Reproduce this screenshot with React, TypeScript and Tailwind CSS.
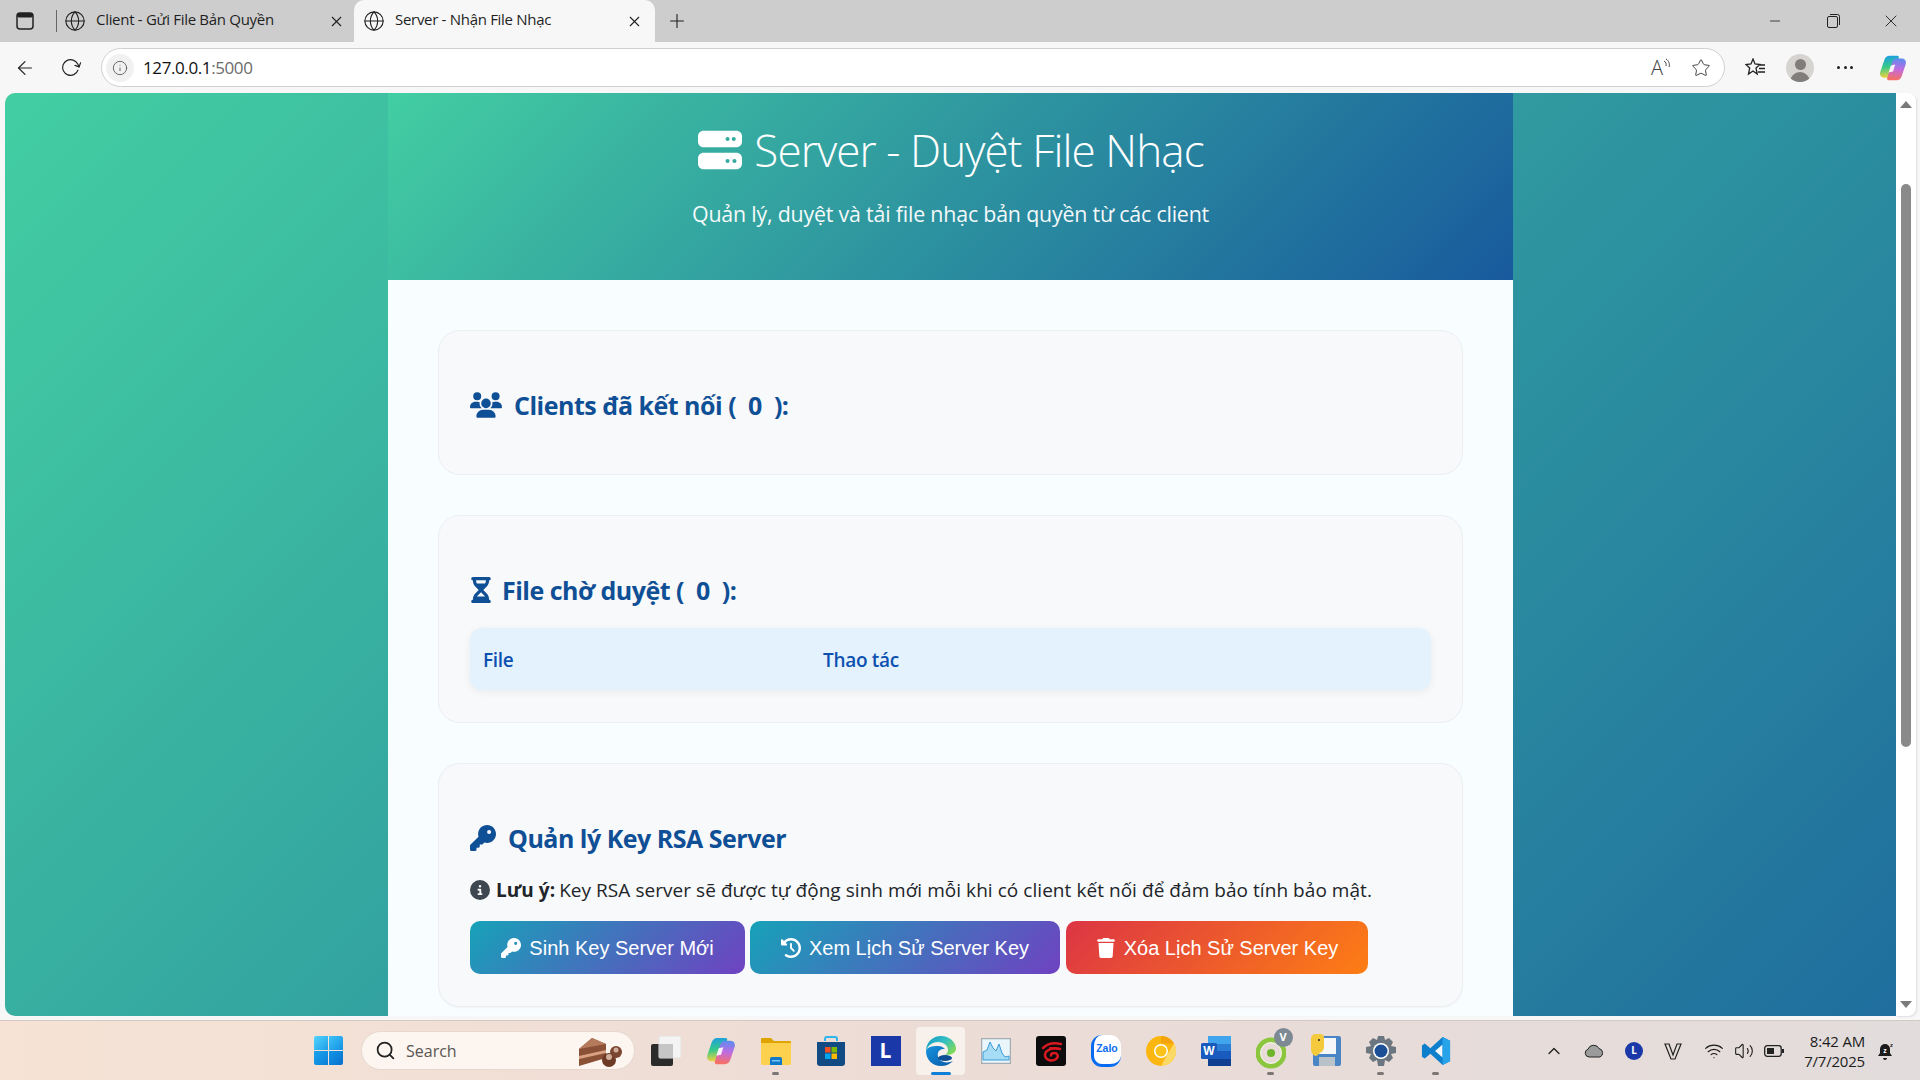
import { FaServer, FaUsers, FaHourglassHalf, FaKey, FaCircleInfo, FaClockRotateLeft, FaTrash } from "react-icons/fa6";
import { ArrowLeft, RotateCw, Info, Star, Plus, X, Minus, ChevronUp, Search, Globe, Wifi, Volume2 } from "lucide-react";

const ui = "font-['Open_Sans','Noto_Sans',sans-serif]";

function CopilotIcon({ size, id }: { size: number; id: string }) {
  return (
    <svg width={size} height={size} viewBox="0 0 32 32">
      <defs>
        <linearGradient id={id + "a"} x1="0.3" y1="0" x2="0.4" y2="1">
          <stop offset="0" stopColor="#1b9de2" />
          <stop offset="0.5" stopColor="#35c98a" />
          <stop offset="1" stopColor="#f5d33c" />
        </linearGradient>
        <linearGradient id={id + "b"} x1="0.6" y1="0" x2="0.5" y2="1">
          <stop offset="0" stopColor="#5a8cf0" />
          <stop offset="0.5" stopColor="#c26be0" />
          <stop offset="1" stopColor="#f8705f" />
        </linearGradient>
      </defs>
      <path d="M12 2h9c1.500 0 2 1.500 1.500 3L17 22c-.8 3-2.600 5-5 5H6c-3.600 0-5.600-3-4.600-6.500L6 7c1-3 3-5 6-5z" fill={`url(#${id}a)`} />
      <path d="M20 30h-9c-1.500 0-2-1.500-1.500-3L15 10c.8-3 2.600-5 5-5h6c3.600 0 5.600 3 4.600 6.500L26 25c-1 3-3 5-6 5z" fill={`url(#${id}b)`} />
      <path d="M13.500 13l5-1-2.500 8-5 1z" fill="#fff" opacity="0.9" />
    </svg>
  );
}

function WinLogo() {
  return (
    <div className="grid h-[29px] w-[29px] grid-cols-2 gap-[1px]">
      <div className="rounded-tl-[2px] bg-gradient-to-br from-[#52d4fb] to-[#1a9fe8]" />
      <div className="rounded-tr-[2px] bg-gradient-to-br from-[#3cc2f6] to-[#1591e3]" />
      <div className="rounded-bl-[2px] bg-gradient-to-br from-[#1ba4ec] to-[#0c7fd8]" />
      <div className="rounded-br-[2px] bg-gradient-to-br from-[#1497e8] to-[#0a70cc]" />
    </div>
  );
}

function CakeIcon() {
  return (
    <svg width="46" height="32" viewBox="0 0 46 32">
      <path d="M2 14L15 3l14 6v14L2 31z" fill="#8a5136" />
      <path d="M2 14L15 3l14 6-27 5z" fill="#b57a5b" />
      <path d="M2 21l27-6v3L2 24z" fill="#d9a283" />
      <circle cx="32" cy="25" r="7" fill="#6d3a25" />
      <circle cx="39" cy="17" r="6" fill="#7b4630" />
      <circle cx="32" cy="22" r="3" fill="#cfae9b" />
      <circle cx="39" cy="15" r="2.500" fill="#cfae9b" />
    </svg>
  );
}

function TaskView() {
  return (
    <svg width="30" height="30" viewBox="0 0 30 30">
      <rect x="0" y="8" width="22" height="22" rx="2" fill="#2b2b2b" />
      <rect x="8" y="0" width="22" height="22" rx="1" fill="#f4f4f4" stroke="#e2e2e2" />
      <rect x="8" y="8" width="14" height="14" fill="#c6c6c6" />
    </svg>
  );
}

function FolderIcon() {
  return (
    <svg width="30" height="30" viewBox="0 0 30 30">
      <path d="M0 3a1 1 0 0 1 1-1h9l3 3h16a1 1 0 0 1 1 1v4H0z" fill="#dfa400" />
      <path d="M0 7h30v21a1 1 0 0 1-1 1H1a1 1 0 0 1-1-1z" fill="#fdd04d" />
      <path d="M9 23a2 2 0 0 1 2-2h8a2 2 0 0 1 2 2v6H9z" fill="#0f78c9" />
      <rect x="11" y="24" width="8" height="1.500" fill="#7cc6f4" />
    </svg>
  );
}

function StoreIcon() {
  return (
    <svg width="30" height="32" viewBox="0 0 30 32">
      <path d="M9 6V4a2 2 0 0 1 2-2h8a2 2 0 0 1 2 2v2" fill="none" stroke="#2bb6ee" strokeWidth="2" />
      <path d="M1 7h28v21a3 3 0 0 1-3 3H4a3 3 0 0 1-3-3z" fill="#124a84" />
      <rect x="9" y="12" width="5.500" height="5.500" fill="#f25022" />
      <rect x="15.500" y="12" width="5.500" height="5.500" fill="#7fba00" />
      <rect x="9" y="18.500" width="5.500" height="5.500" fill="#00a4ef" />
      <rect x="15.500" y="18.500" width="5.500" height="5.500" fill="#ffb900" />
    </svg>
  );
}

function LApp() {
  return (
    <div className={`flex h-[30px] w-[30px] items-center justify-center bg-[#1b38a8] text-[21px] font-bold text-white ${ui}`}>L</div>
  );
}

function EdgeIcon({ size }: { size: number }) {
  return (
    <svg width={size} height={size} viewBox="0 0 32 32">
      <defs>
        <linearGradient id="edgeTop" x1="0" y1="0" x2="1" y2="0.7">
          <stop offset="0" stopColor="#0f96c9" />
          <stop offset="0.55" stopColor="#35c1c1" />
          <stop offset="1" stopColor="#7fd858" />
        </linearGradient>
        <linearGradient id="edgeLow" x1="0" y1="0" x2="1" y2="1">
          <stop offset="0" stopColor="#1593de" />
          <stop offset="1" stopColor="#0a5aa8" />
        </linearGradient>
      </defs>
      <path d="M16 1C7 1 1 8 1 16c2-6 7-9 12-9 6 0 10 4 10 8 0 2-1 3.500-3 4.500 4 1 11-.5 11-6C31 7 24 1 16 1z" fill="url(#edgeTop)" />
      <path d="M1 16c0 9 7 15 15 15 5 0 9-2 12-5-4 2-10 2-13-1-3-3-3-8 0-10 2-1.500 5-1 5-1-2-2-4-3-7-3C7 11 2 12 1 16z" fill="url(#edgeLow)" />
      <ellipse cx="20" cy="23" rx="7" ry="3" fill="#0d4f94" />
    </svg>
  );
}

function MonitorIcon() {
  return (
    <svg width="30" height="26" viewBox="0 0 30 26">
      <rect x="0.500" y="0.500" width="29" height="25" fill="#eaf6fb" stroke="#a3adb3" strokeWidth="1.500" />
      <path d="M2 22V14l4-2 3-8 3 6 3 3 3-7 3 9 3 4 4-1v4z" fill="#a6dcf5" stroke="#3e9ad6" />
    </svg>
  );
}

function GarenaIcon() {
  return (
    <svg width="30" height="30" viewBox="0 0 30 30" fill="none" stroke="#d81921" strokeLinecap="round">
      <rect width="30" height="30" rx="3" fill="#0c0c0c" stroke="none" />
      <path d="M7 12C11 8 17 6 25 8" strokeWidth="2.500" />
      <path d="M24 13C17 11 9 14 9 19c0 5 7 7 11 4 3-2 2-6-2-6-2 0-3 1-3 2.500" strokeWidth="2.500" />
      <path d="M14 12l10 1" strokeWidth="2" />
    </svg>
  );
}

function ZaloIcon() {
  return (
    <div className="flex h-[32px] w-[30px] items-center justify-center rounded-[11px] border-b-[3px] border-l-[3px] border-[#0a6cf0] bg-white font-['Liberation_Sans',sans-serif] text-[10.500px] font-bold text-[#0a6cf0]">
      Zalo
    </div>
  );
}

function CanaryIcon() {
  return (
    <svg width="30" height="34" viewBox="0 0 30 30">
      <circle cx="15" cy="15" r="15" fill="#fbb710" />
      <path d="M15 0a15 15 0 0 1 13 7.500H15z" fill="#f5a30a" />
      <path d="M28 7.500A15 15 0 0 1 15 30l6-11z" fill="#fcd966" />
      <circle cx="15" cy="15" r="7" fill="#fff" />
      <circle cx="15" cy="15" r="5.500" fill="#fbc21c" />
    </svg>
  );
}

function WordIcon() {
  return (
    <svg width="30" height="32" viewBox="0 0 30 32">
      <rect x="7" y="1" width="23" height="30" rx="2" fill="#2b7cd3" />
      <rect x="7" y="1" width="23" height="8" fill="#41a5ee" />
      <rect x="7" y="16" width="23" height="8" fill="#185abd" />
      <rect x="7" y="24" width="23" height="7" fill="#103f91" />
      <rect x="0" y="8" width="16" height="16" rx="1.500" fill="#185abd" />
      <text x="8" y="20" textAnchor="middle" fontSize="12" fontWeight="700" fill="#fff" fontFamily="Liberation Sans">W</text>
    </svg>
  );
}

function RingBadgeIcon() {
  return (
    <div className="relative h-[34px] w-[30px]">
      <svg width="30" height="34" viewBox="0 0 30 30" className="mt-[2px]">
        <circle cx="15" cy="15" r="13" fill="none" stroke="#8cc63f" strokeWidth="5" />
        <circle cx="15" cy="15" r="10.500" fill="none" stroke="#ffffff" strokeWidth="0.800" />
        <circle cx="15" cy="15" r="4" fill="#6fb52c" />
      </svg>
      <div className={`absolute -right-[7px] -top-[6px] flex h-[19px] w-[19px] items-center justify-center rounded-full bg-[#7d8a94] text-[11px] font-bold text-white ${ui}`}>V</div>
    </div>
  );
}

function FloppyIcon() {
  return (
    <svg width="30" height="34" viewBox="0 0 30 34">
      <rect x="2" y="2" width="28" height="30" rx="2" fill="#4a86c5" />
      <rect x="7" y="4" width="18" height="16" fill="#f4f6f8" />
      <rect x="8" y="23" width="16" height="9" fill="#b9c2c9" />
      <path d="M0 5c0-3 2-5 5-5h5c2 0 3 2 3 4v9c0 3-2 5-4 6-2 1-3 3-4 3-3 0-5-4-5-7z" fill="#f4c93c" />
      <circle cx="8" cy="6" r="1" fill="#222" />
    </svg>
  );
}

function SettingsIcon() {
  return (
    <svg width="30" height="30" viewBox="0 0 30 30">
      <path d="M12 0h6l1 4 4-2 4 4-2 4 5 1v6l-5 1 2 4-4 4-4-2-1 6h-6l-1-6-4 2-4-4 2-4-5-1v-6l5-1-2-4 4-4 4 2z" fill="#6b7680" />
      <circle cx="15" cy="15" r="8" fill="#fff" />
      <circle cx="15" cy="15" r="6.500" fill="#1d4f96" />
    </svg>
  );
}

function VsCodeIcon() {
  return (
    <svg width="30" height="32" viewBox="0 0 32 32">
      <path d="M23 1l8 4v22l-8 4-13-12-6 5-3-2V10l3-2 6 5z" fill="#0e7fcd" />
      <path d="M23 9l-8 7 8 7z" fill="#ffffff" opacity="0.95" />
      <path d="M23 1l8 4v22l-8 4z" fill="#27a3ea" />
    </svg>
  );
}

function Dot({ active }: { active?: boolean }) {
  return <div className={active ? "h-[3px] w-[20px] rounded-full bg-[#0f7fd8]" : "h-[3px] w-[7px] rounded-full bg-[#7b7673]"} />;
}

// one taskbar slot, icon centered with running dot under it
function Slot({ children, dot, active }: { children: React.ReactNode; dot?: boolean; active?: boolean }) {
  return (
    <div className={`relative mx-[3px] flex h-[48px] w-[49px] shrink-0 flex-col items-center justify-center rounded-[4px] ${active ? "bg-[#f8f0ea]" : ""}`}>
      {children}
      {(dot || active) && (
        <div className="absolute bottom-[0px] flex justify-center">
          <Dot active={active} />
        </div>
      )}
    </div>
  );
}

export default function App() {
  return (
    <div className={`flex h-screen w-full flex-col overflow-hidden bg-[#f7f7f7] ${ui}`}>
      {/* tab strip */}
      <div className="flex h-[42px] shrink-0 items-stretch bg-[#cdcdcd] text-[#1f1f1f]">
        <div className="flex w-[56px] items-center pl-[16px]">
          <svg width="18" height="18" viewBox="0 0 18 18" fill="none">
            <rect x="1" y="1" width="16" height="16" rx="3" stroke="#222" strokeWidth="1.500" />
            <rect x="1" y="1" width="16" height="4.500" rx="2" fill="#222" />
          </svg>
        </div>
        <div className="flex w-[298px] items-center pr-[9px]">
          <div className="mr-[7px] h-[22px] w-px bg-[#666]" />
          <Globe size={22} strokeWidth={1.200} />
          <span className="-mt-[3px] ml-[10px] flex-1 text-[15px] tracking-[-0.3px]">Client - Gửi File Bản Quyền</span>
          <X size={17} strokeWidth={1.500} />
        </div>
        <div className="flex w-[301px] items-center rounded-t-[10px] bg-[#f7f7f7] pl-[9px] pr-[12px]">
          <Globe size={22} strokeWidth={1.200} />
          <span className="-mt-[3px] ml-[10px] flex-1 text-[15px] tracking-[-0.3px]">Server - Nhận File Nhạc</span>
          <X size={17} strokeWidth={1.500} />
        </div>
        <div className="flex w-[44px] items-center justify-center">
          <Plus size={22} strokeWidth={1.200} />
        </div>
        <div className="ml-auto flex items-center">
          <div className="flex w-[58px] justify-center"><Minus size={16} strokeWidth={1.200} /></div>
          <div className="flex w-[58px] justify-center">
            <svg width="13" height="14" viewBox="0 0 13 14" fill="none" stroke="#222">
              <rect x="0.500" y="2.500" width="10" height="11" rx="1.500" />
              <path d="M3 .5h7.500a2 2 0 0 1 2 2V11" />
            </svg>
          </div>
          <div className="flex w-[58px] justify-center"><X size={20} strokeWidth={1.100} /></div>
        </div>
      </div>

      {/* toolbar */}
      <div className="flex h-[51px] shrink-0 items-center bg-[#f7f7f7]">
        <div className="flex w-[101px] items-center pl-[14px] text-[#222]">
          <ArrowLeft size={22} strokeWidth={1.300} />
          <RotateCw size={21} strokeWidth={1.300} className="ml-[24px] rotate-[20deg]" />
        </div>
        <div className="flex h-[39px] w-[1624px] items-center rounded-full border border-[#d0d0d0] bg-white pl-[4px] pr-[12px]">
          <div className="flex h-[28px] w-[28px] items-center justify-center rounded-full bg-[#f1f1f1]">
            <Info size={16} strokeWidth={1.300} className="text-[#555]" />
          </div>
          <span className="ml-[9px] text-[17px] tracking-[-0.4px] text-[#111]">
            127.0.0.1<span className="text-[#6b6b6b]">:5000</span>
          </span>
          <div className="ml-auto flex items-center gap-[20px] pr-[1px] text-[#444]">
            <span className="flex items-start text-[20px] font-light leading-none">
              A
              <svg width="8" height="14" viewBox="0 0 8 14" fill="none" stroke="#444">
                <path d="M1 3c2 1 2.500 3 2 5M3 1c3 2 4 5 3 8" />
              </svg>
            </span>
            <Star size={20} strokeWidth={1.200} />
          </div>
        </div>
        <div className="flex flex-1 items-center pl-[20px] text-[#222]">
          <svg width="21" height="20" viewBox="0 0 21 20" fill="none" stroke="#222" strokeWidth="1.300">
            <path d="M8 1l2 5 5 .5-4 3.500 1.200 6L8 13l-4.500 3 1.200-6L1 6.500 6 6z" />
            <path d="M15 7h5M14 10.500h6M13 14h7" />
          </svg>
          <div className="ml-[20px] h-[28px] w-[28px] overflow-hidden rounded-full bg-[#d6d4d1]">
            <div className="mx-auto mt-[5px] h-[11px] w-[11px] rounded-full bg-[#807d7a]" />
            <div className="mx-auto mt-[2px] h-[14px] w-[20px] rounded-t-full bg-[#807d7a]" />
          </div>
          <span className="ml-[23px] flex w-[16px] justify-between">
            <i className="h-[3px] w-[3px] rounded-full bg-[#222]" />
            <i className="h-[3px] w-[3px] rounded-full bg-[#222]" />
            <i className="h-[3px] w-[3px] rounded-full bg-[#222]" />
          </span>
          <span className="ml-[26px]"><CopilotIcon size={28} id="cpTop" /></span>
        </div>
      </div>

      {/* viewport */}
      <div className="flex h-[923px] shrink-0 pl-[5px] pr-[4px]">
        <div className="h-full w-[1891px] overflow-hidden rounded-bl-[10px] rounded-tl-[10px]">
          {/* the gradient runs the full document height, the viewport shows only the top of it */}
          <div className="h-[1510px] bg-[linear-gradient(135deg,#43cea2,#185a9d)]">
            <div className="mx-auto h-full w-[1125px] bg-[#f8fdff]">
              <header className="flex h-[187px] flex-col items-center bg-[linear-gradient(135deg,#43cea2,#185a9d)] pt-[27px] text-white">
                <h1 className="flex items-center text-[44px] font-light leading-[60px] tracking-[-0.9px]">
                  <FaServer size={44} className="mr-[12px] ml-[1px]" />
                  Server - Duyệt File Nhạc
                </h1>
                <p className="mt-[19px] text-[21.400px] leading-[30px] tracking-[-0.2px] opacity-95">Quản lý, duyệt và tải file nhạc bản quyền từ các client</p>
              </header>

              <main className="flex flex-col gap-[40px] px-[50px] pt-[50px]">
                <section className="rounded-[22px] border border-[#eceef0] bg-[#f8f9fa] px-[31px] pb-[52px] pt-[57px]">
                  <h2 className="flex items-center text-[25px] font-bold leading-[34px] tracking-[-0.5px] text-[#0f4f96]">
                    <FaUsers size={32} className="mr-[12px]" />
                    Clients đã kết nối ( &nbsp;0&nbsp; ):
                  </h2>
                </section>

                <section className="rounded-[22px] border border-[#eceef0] bg-[#f8f9fa] px-[31px] pb-[32px] pt-[57px]">
                  <h2 className="flex items-center text-[25px] font-bold leading-[34px] tracking-[-0.5px] text-[#0f4f96]">
                    <FaHourglassHalf size={26} className="-ml-[2px] mr-[8px]" />
                    File chờ duyệt ( &nbsp;0&nbsp; ):
                  </h2>
                  <div className="mt-[21px] overflow-hidden rounded-[12px] bg-[#e3f2fd] shadow-[0_2px_8px_rgba(0,0,0,0.06)]">
                    <table className="w-full border-collapse text-left">
                      <thead>
                        <tr className="text-[19px] text-[#0d50b0]">
                          <th className="w-[353px] px-[13px] pb-[14px] pt-[16px] font-semibold leading-[32px] tracking-[-0.3px]">File</th>
                          <th className="px-[0px] pb-[14px] pt-[16px] font-semibold leading-[32px] tracking-[-0.3px]">Thao tác</th>
                        </tr>
                      </thead>
                    </table>
                  </div>
                </section>

                <section className="rounded-[22px] border border-[#eceef0] bg-[#f8f9fa] px-[31px] pb-[32px] pt-[57px] shadow-[0_1px_2px_rgba(0,0,0,0.04)]">
                  <h2 className="flex items-center text-[25px] font-bold leading-[34px] tracking-[-0.5px] text-[#0f4f96]">
                    <FaKey size={26} className="mr-[12px]" />
                    Quản lý Key RSA Server
                  </h2>
                  <p className="mt-[20px] flex items-center text-[19px] leading-[30px] tracking-[0.05px] text-[#212529]">
                    <FaCircleInfo size={20} className="mr-[6px] text-[#3e4650]" />
                    <b className="mr-[4px] font-bold">Lưu ý:</b>
                    Key RSA server sẽ được tự động sinh mới mỗi khi có client kết nối để đảm bảo tính bảo mật.
                  </p>
                  <div className="mt-[16px] flex gap-[5px] font-['Liberation_Sans',sans-serif] text-[20px] text-white">
                    <button className="flex h-[53px] w-[275px] items-center justify-center gap-[8px] rounded-[10px] bg-[linear-gradient(135deg,#17a2b8,#6f42c1)]">
                      <FaKey size={20} />
                      Sinh Key Server Mới
                    </button>
                    <button className="flex h-[53px] w-[310px] items-center justify-center gap-[8px] rounded-[10px] bg-[linear-gradient(135deg,#17a2b8,#6f42c1)]">
                      <FaClockRotateLeft size={20} />
                      Xem Lịch Sử Server Key
                    </button>
                    <button className="ml-[1px] flex h-[53px] w-[302px] items-center justify-center gap-[8px] rounded-[10px] bg-[linear-gradient(135deg,#dc3545,#fd7e14)]">
                      <FaTrash size={20} />
                      Xóa Lịch Sử Server Key
                    </button>
                  </div>
                </section>
              </main>
            </div>
          </div>
        </div>
        {/* scrollbar */}
        <div className="flex h-full w-[20px] flex-col items-center rounded-r-[8px] bg-white py-[8px] shadow-[1px_1px_2px_rgba(0,0,0,0.1)]">
          <div className="h-0 w-0 border-x-[6px] border-b-[7px] border-x-transparent border-b-[#7a7a7a]" />
          <div className="mt-[76px] h-[563px] w-[10px] rounded-full bg-[#8a8a8a]" />
          <div className="mt-auto h-0 w-0 border-x-[6px] border-t-[7px] border-x-transparent border-t-[#7a7a7a]" />
        </div>
      </div>

      {/* taskbar */}
      <div className="mt-[4px] flex h-[60px] flex-1 items-center border-t border-[#d3c8c2] bg-gradient-to-r from-[#f6e3d6] via-[#ecdcd6] to-[#e2dcdc] pl-[301px]">
        <div className="flex w-[55px] justify-center"><WinLogo /></div>
        <div className="ml-[5px] flex h-[39px] w-[274px] items-center rounded-full border border-[#e6d8ce] bg-[#fdf5ef] pl-[13px] pr-[11px] text-[#5a5654]">
          <Search size={21} strokeWidth={2} className="text-[#222]" />
          <span className="ml-[10px] flex-1 text-[16px]">Search</span>
          <CakeIcon />
        </div>
        <div className="ml-[3px] flex items-center">
          <Slot><TaskView /></Slot>
          <Slot><CopilotIcon size={30} id="cpTask" /></Slot>
          <Slot dot><FolderIcon /></Slot>
          <Slot><StoreIcon /></Slot>
          <Slot><LApp /></Slot>
          <Slot active><EdgeIcon size={32} /></Slot>
          <Slot><MonitorIcon /></Slot>
          <Slot><GarenaIcon /></Slot>
          <Slot><ZaloIcon /></Slot>
          <Slot><CanaryIcon /></Slot>
          <Slot><WordIcon /></Slot>
          <Slot dot><RingBadgeIcon /></Slot>
          <Slot><FloppyIcon /></Slot>
          <Slot dot><SettingsIcon /></Slot>
          <Slot dot><VsCodeIcon /></Slot>
        </div>
        <div className="ml-auto flex items-center pr-[27px] text-[#1c1c1c]">
          <ChevronUp size={20} strokeWidth={1.500} />
          <svg className="ml-[20px]" width="21" height="14" viewBox="0 0 21 14">
            <path d="M5 13a4 4 0 0 1-1-7.800A6 6 0 0 1 15 4.500 4.500 4.500 0 0 1 16 13z" fill="#9b9b9b" stroke="#222" />
          </svg>
          <div className={`ml-[20px] flex h-[18px] w-[18px] items-center justify-center rounded-full bg-[#1b38a8] text-[10px] font-bold text-white ${ui}`}>L</div>
          <svg className="ml-[21px]" width="18" height="18" viewBox="0 0 18 18" fill="none" stroke="#222" strokeWidth="1.200">
            <path d="M1 2h4l4 11 4-11h4l-6 15H7zM5 2l4 11" />
          </svg>
          <Wifi size={20} strokeWidth={1.400} className="ml-[22px]" />
          <Volume2 size={20} strokeWidth={1.300} className="ml-[10px]" />
          <svg className="ml-[10px]" width="20" height="12" viewBox="0 0 20 12" fill="none">
            <rect x="0.700" y="0.700" width="16.500" height="10.600" rx="2.500" stroke="#222" strokeWidth="1.300" />
            <rect x="3" y="3" width="7" height="6" fill="#222" />
            <rect x="18" y="4" width="2" height="4" fill="#222" />
          </svg>
          <div className="ml-[20px] flex flex-col items-end text-[15px] leading-[20px] tracking-[-0.2px]">
            <span>8:42 AM</span>
            <span>7/7/2025</span>
          </div>
          <svg className="ml-[12px]" width="16" height="20" viewBox="0 0 16 20">
            <path d="M8 3a5 5 0 0 0-5 5v4l-2 3h14l-2-3V8a5 5 0 0 0-5-5zM6 17h4a2 2 0 0 1-4 0z" fill="#1c1c1c" />
            <text x="8" y="12" textAnchor="middle" fontSize="7" fontWeight="700" fill="#fff" fontFamily="Liberation Sans">z</text>
            <text x="13" y="6" fontSize="6" fontWeight="700" fill="#1c1c1c" fontFamily="Liberation Sans">z</text>
          </svg>
        </div>
      </div>
    </div>
  );
}
